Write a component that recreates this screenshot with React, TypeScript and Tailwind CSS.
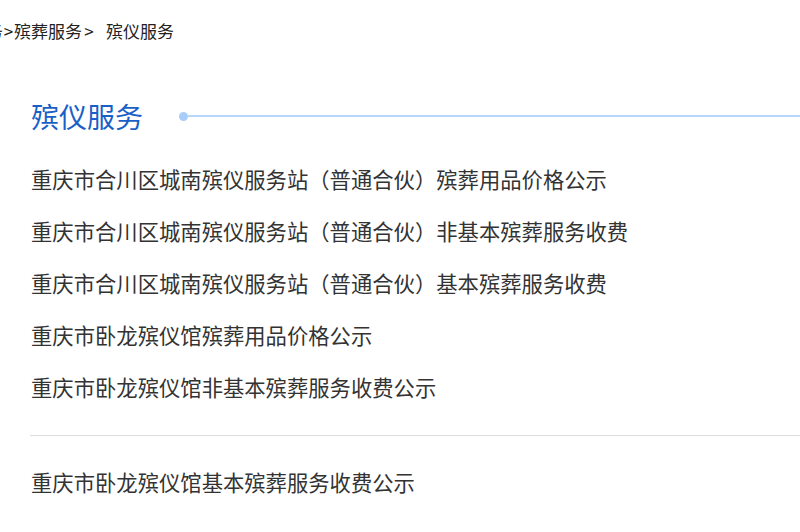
const items = [
  '重庆市合川区城南殡仪服务站（普通合伙）殡葬用品价格公示',
  '重庆市合川区城南殡仪服务站（普通合伙）非基本殡葬服务收费',
  '重庆市合川区城南殡仪服务站（普通合伙）基本殡葬服务收费',
  '重庆市卧龙殡仪馆殡葬用品价格公示',
  '重庆市卧龙殡仪馆非基本殡葬服务收费公示',
];

const font = { fontFamily: '"Noto Sans CJK SC", "Noto Sans", sans-serif' };

export default function App() {
  return (
    <div className="w-[800px] h-[532px] overflow-hidden bg-white text-[#333]" style={font}>
      <div className="pt-[20px] text-[17px] leading-[22px] whitespace-nowrap text-[#222] flex ml-[-14px]">
        <span>务</span>
        <span className="w-[11px] text-center">&gt;</span>
        <span>殡葬服务</span>
        <span className="w-[14px] text-center">&gt;</span>
        <span className="ml-[10px]">殡仪服务</span>
      </div>

      <div className="mt-[54px] pl-[31px] flex items-center h-[40px]">
        <h2 className="text-[28px] leading-[40px] text-[#1a5fc7] whitespace-nowrap">殡仪服务</h2>
        <div className="ml-[36px] flex-1 flex items-center">
          <span className="w-[9px] h-[9px] rounded-full bg-[#a8cdf8] shrink-0" />
          <span className="flex-1 h-[2px] bg-[#b7d7fb]" />
        </div>
      </div>

      <ul className="mt-[17px] pl-[31px]">
        {items.map((t) => (
          <li key={t} className="h-[52px] flex items-center text-[21.33px] whitespace-nowrap">
            {t}
          </li>
        ))}
      </ul>

      <div className="ml-[30px] mt-[22px] h-px bg-[#dddddd]" />

      <div className="mt-[20px] pl-[31px] h-[52px] flex items-center text-[21.33px] whitespace-nowrap">
        重庆市卧龙殡仪馆基本殡葬服务收费公示
      </div>
    </div>
  );
}
